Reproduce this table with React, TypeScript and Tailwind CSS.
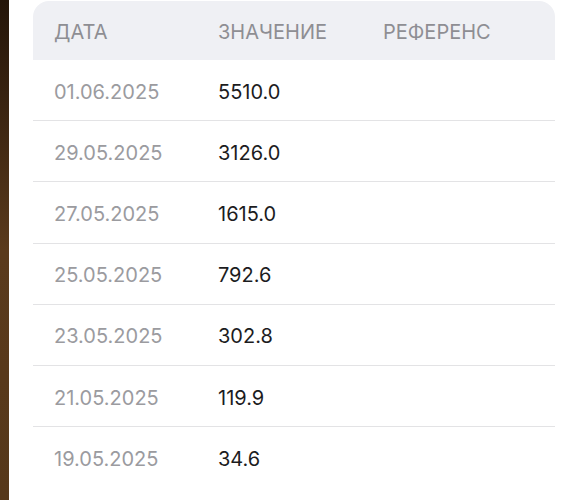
import React from "react";

const rows = [
  ["01.06.2025", "5510.0"],
  ["29.05.2025", "3126.0"],
  ["27.05.2025", "1615.0"],
  ["25.05.2025", "792.6"],
  ["23.05.2025", "302.8"],
  ["21.05.2025", "119.9"],
  ["19.05.2025", "34.6"],
];

export default function App() {
  return (
    <div className="flex h-[500px] w-[564px] overflow-hidden bg-white" style={{ fontFamily: "Inter, 'Noto Sans', sans-serif" }}>
      <div className="w-[9px] shrink-0 bg-gradient-to-b from-[#241509] via-[#5a3a1c] to-[#56381a]" />
      <div className="flex-1 pl-[24px] pr-[9px] pt-px">
        <div className="overflow-hidden rounded-t-[16px]">
          <div className="flex h-[59px] items-center bg-[#eff0f4] pl-[21px] pt-[3px] text-[20px] text-[#8e8e93]">
            <div className="w-[164px]">ДАТА</div>
            <div className="w-[165px]">ЗНАЧЕНИЕ</div>
            <div>РЕФЕРЕНС</div>
          </div>
          {rows.map(([d, v]) => (
            <div key={d} className="flex h-[61.2px] items-center border-b border-[#e3e3e5] pl-[21px] pt-[3px] text-[20px] last:border-b-0">
              <div className="w-[164px] text-[#9b9b9f]">{d}</div>
              <div className="w-[165px] text-[#1c1c1e]">{v}</div>
              <div />
            </div>
          ))}
        </div>
      </div>
    </div>
  );
}
